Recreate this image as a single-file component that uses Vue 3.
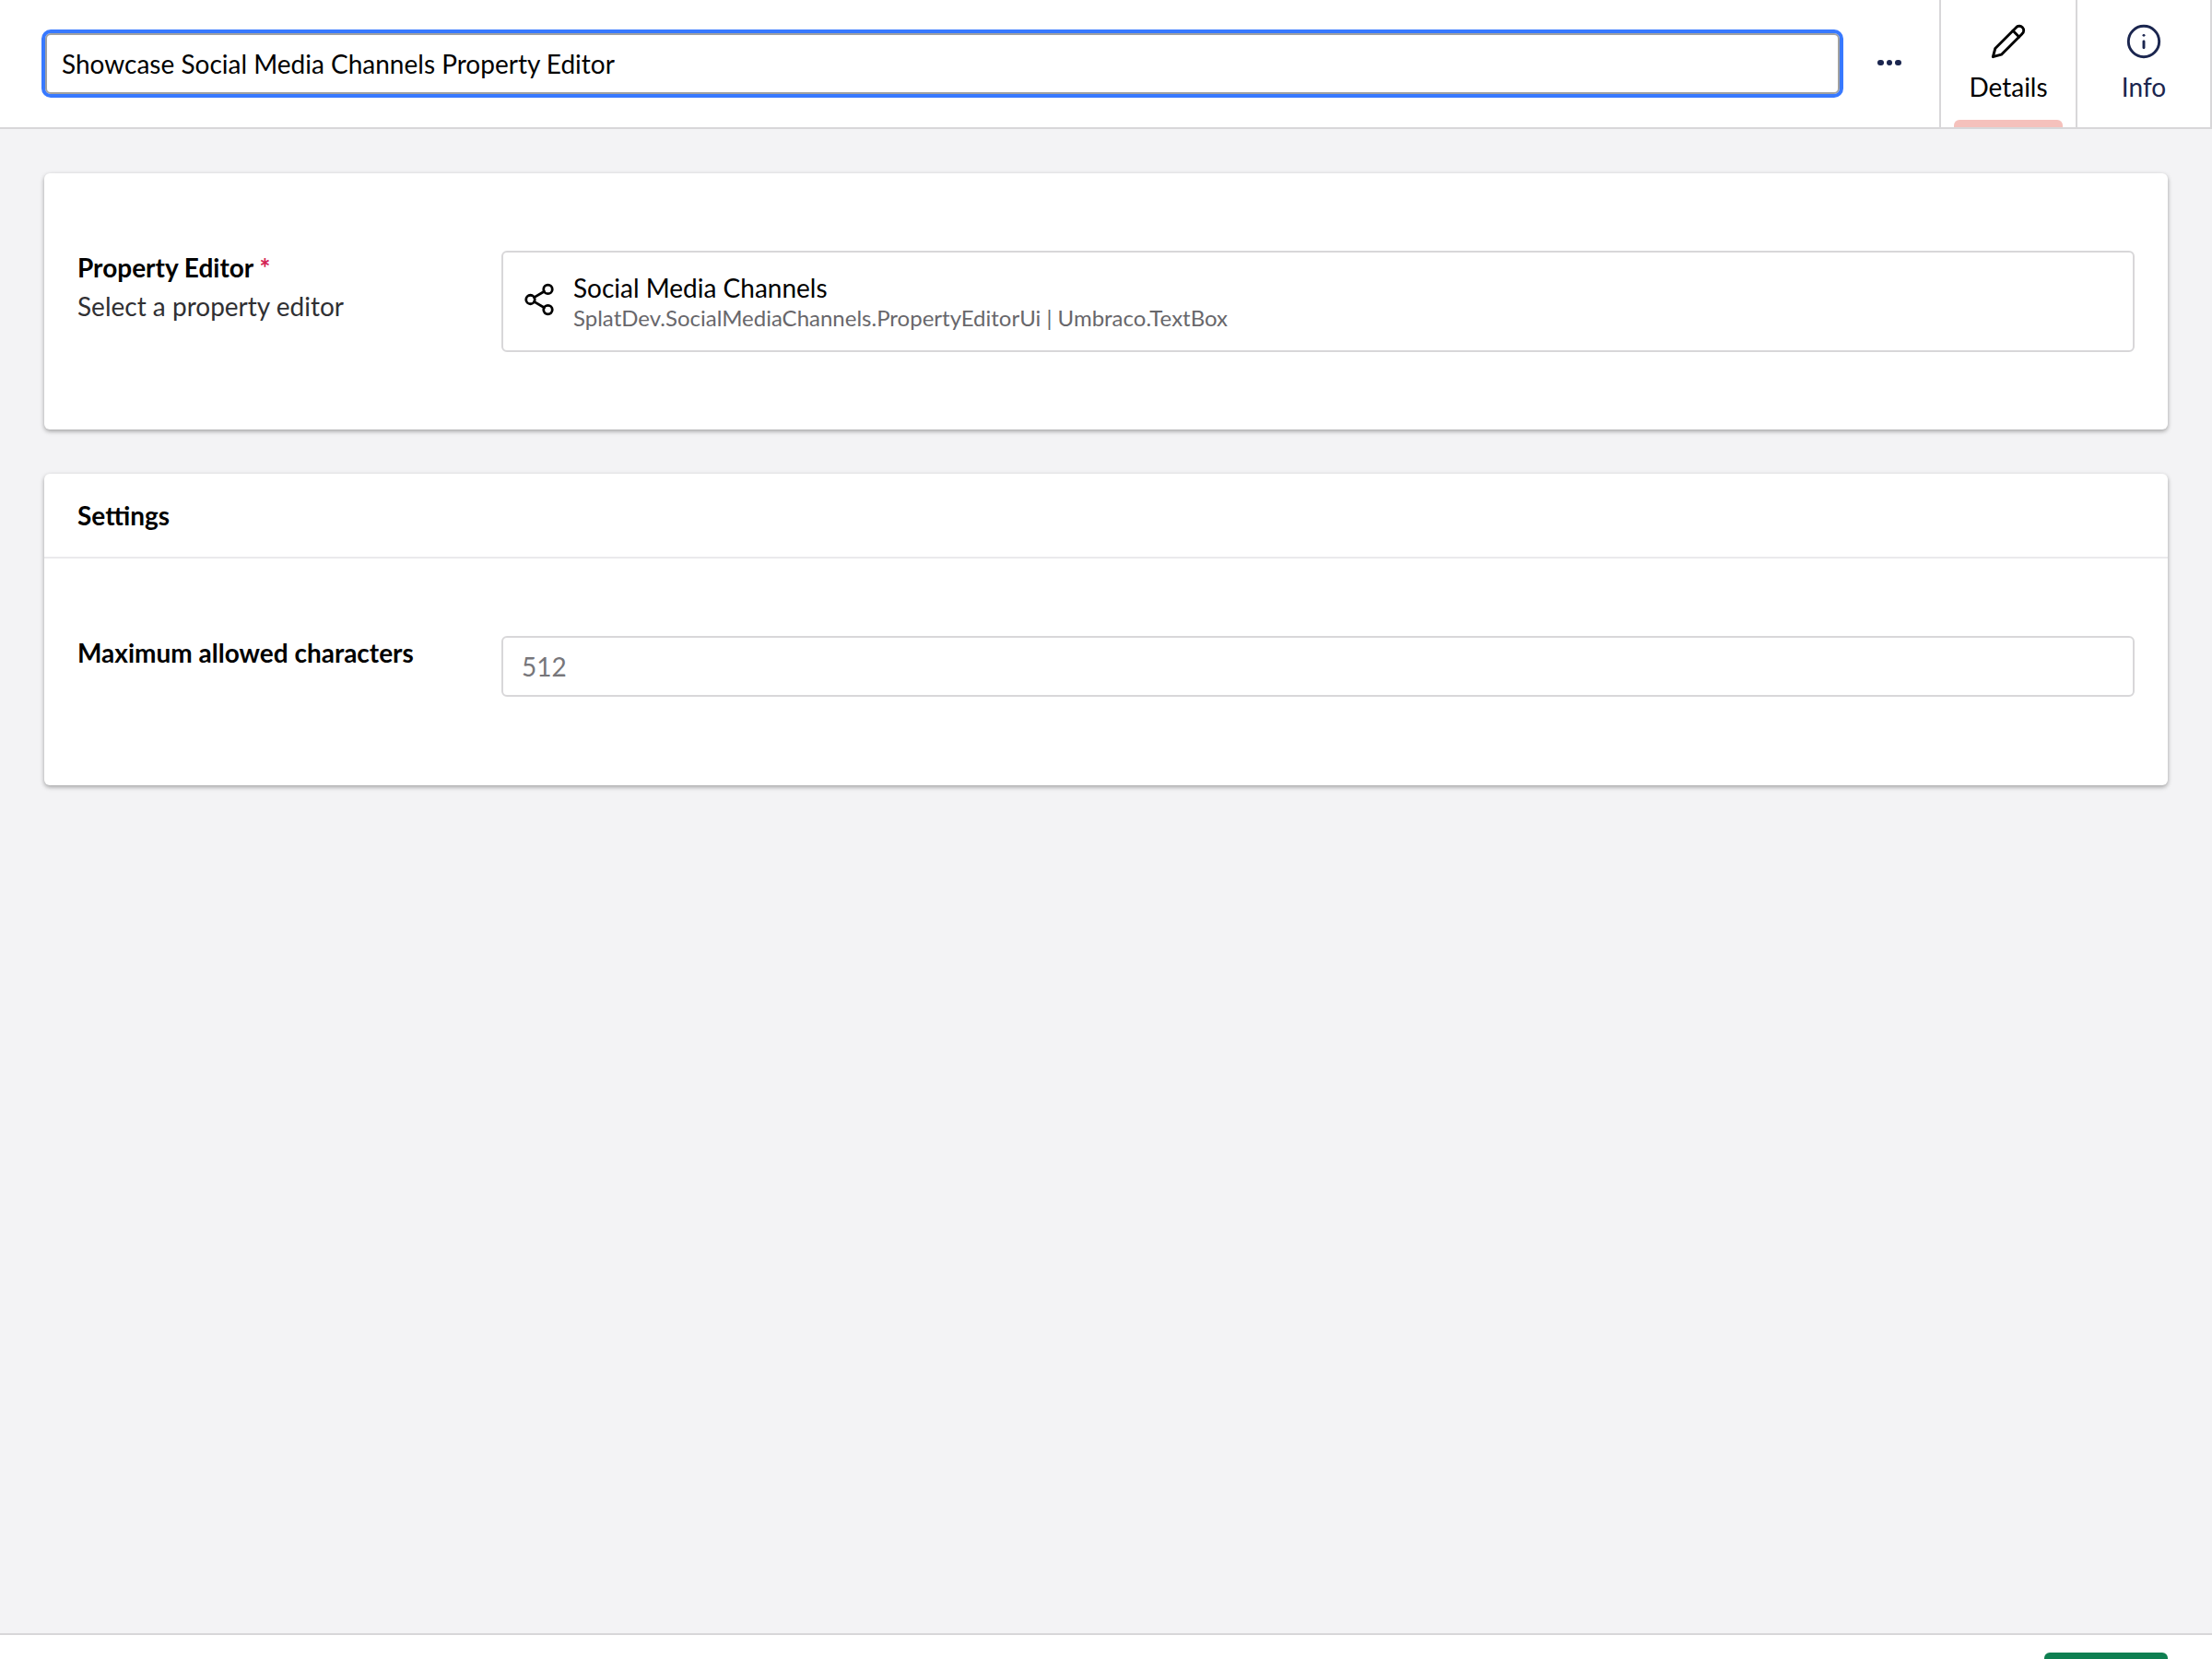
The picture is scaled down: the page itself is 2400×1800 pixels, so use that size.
<template>
  <div class="page">
    <header class="topbar">
      <div class="name-input">Showcase Social Media Channels Property Editor</div>
      <div class="more" aria-label="More"><span></span><span></span><span></span></div>
      <nav class="tabs">
        <div class="tab tab-active">
          <svg class="tab-icon" viewBox="0 0 24 24"><path d="M17 3a2.85 2.83 0 1 1 4 4L7.5 20.5 2 22l1.5-5.5Z"/><path d="m15 5 4 4"/></svg>
          <span class="tab-label">Details</span>
          <i class="tab-marker"></i>
        </div>
        <div class="tab tab-info">
          <svg class="tab-icon" viewBox="0 0 24 24"><circle cx="12" cy="12" r="10"/><path d="M12 16v-4"/><path d="M12 8h.01"/></svg>
          <span class="tab-label">Info</span>
        </div>
      </nav>
    </header>

    <main class="content">
      <section class="card">
        <div class="row row-first">
          <div class="label-col">
            <div class="label">Property Editor <span class="req">*</span></div>
            <div class="desc">Select a property editor</div>
          </div>
          <div class="picked">
            <svg class="picked-icon" viewBox="0 0 24 24"><circle cx="18" cy="5" r="3"/><circle cx="6" cy="12" r="3"/><circle cx="18" cy="19" r="3"/><path d="m8.59 13.51 6.83 3.98"/><path d="m15.41 6.51-6.82 3.98"/></svg>
            <div class="picked-text">
              <div class="picked-name">Social Media Channels</div>
              <div class="picked-alias">SplatDev.SocialMediaChannels.PropertyEditorUi | Umbraco.TextBox</div>
            </div>
          </div>
        </div>
      </section>

      <section class="card">
        <div class="card-head">Settings</div>
        <div class="row row-settings">
          <div class="label-col">
            <div class="label">Maximum allowed characters</div>
          </div>
          <div class="number-input">512</div>
        </div>
      </section>
    </main>

    <footer class="footer">
      <div class="save"></div>
    </footer>
  </div>
</template>

<script setup>
</script>

<style>
html, body { margin: 0; background: #f3f3f5; }
</style>

<style scoped>
.page {
  width: 2400px;
  height: 1800px;
  overflow: hidden;
  display: flex;
  flex-direction: column;
  background: #f3f3f5;
  font-family: Lato, "Liberation Sans", sans-serif;
  font-size: 28px;
  line-height: 42px;
  color: #000;
}
.topbar {
  height: 138px;
  flex: none;
  display: flex;
  align-items: stretch;
  background: #fff;
  border-bottom: 2px solid #d8d7d9;
}
.name-input {
  flex: 1;
  height: 66px;
  box-sizing: border-box;
  margin: 36px 0 0 49px;
  padding: 0 16px;
  display: flex;
  align-items: center;
  background: #fff;
  border: 2px solid #a1a1a1;
  border-radius: 6px;
  outline: 4px solid #3879ff;
  color: #000;
}
.more {
  width: 108px;
  flex: none;
  display: flex;
  align-items: center;
  justify-content: center;
  gap: 3px;
  padding-bottom: 2px;
  box-sizing: border-box;
}
.more span {
  width: 6.5px;
  height: 6.5px;
  border-radius: 50%;
  background: #1b264f;
}
.tabs { display: flex; flex: none; }
.tab {
  position: relative;
  box-sizing: border-box;
  display: flex;
  flex-direction: column;
  align-items: center;
  border-left: 2px solid #d8d7d9;
  padding-top: 25px;
  width: 148px;
}
.tab-info {
  width: 148px;
  border-right: 2px solid #d8d7d9;
  color: #1b264f;
}
.tab-icon {
  width: 40px;
  height: 40px;
  display: block;
  fill: none;
  stroke: currentColor;
  stroke-width: 1.75;
  stroke-linecap: round;
  stroke-linejoin: round;
}
.tab-label { margin-top: 8px; }
.tab-marker {
  position: absolute;
  left: 14px;
  bottom: 0;
  width: 118px;
  height: 8px;
  background: #f5c1bc;
  border-radius: 6px 6px 0 0;
}
.content {
  flex: 1;
  min-height: 0;
  padding: 48px;
  display: flex;
  flex-direction: column;
  gap: 48px;
}
.card {
  background: #fff;
  border-radius: 6px;
  box-shadow: 0 2px 6px rgba(0, 0, 0, 0.12), 0 2px 4px rgba(0, 0, 0, 0.24);
}
.card-head {
  height: 90px;
  box-sizing: border-box;
  padding: 0 36px;
  display: flex;
  align-items: center;
  font-weight: 700;
  border-bottom: 2px solid #ebeaec;
  height: 92px;
}
.row {
  display: grid;
  grid-template-columns: 460px 1fr;
  padding: 84px 36px;
}
.row-settings { padding-bottom: 96px; }
.label-col { margin-top: -3px; }
.label { font-weight: 700; }
.req { color: #d42054; }
.desc { color: #303033; }
.picked {
  height: 110px;
  box-sizing: border-box;
  display: flex;
  align-items: center;
  border: 2px solid #d8d7d9;
  border-radius: 6px;
  padding-left: 20px;
}
.picked-icon {
  width: 38px;
  height: 38px;
  flex: none;
  margin-top: -4px;
  fill: none;
  stroke: #000;
  stroke-width: 1.75;
  stroke-linecap: round;
  stroke-linejoin: round;
}
.picked-text { margin-left: 18px; }
.picked-name { line-height: 36px; }
.picked-alias { font-size: 24px; line-height: 30px; color: #68676b; }
.number-input {
  height: 66px;
  box-sizing: border-box;
  display: flex;
  align-items: center;
  padding-left: 20px;
  border: 2px solid #d8d7d9;
  border-radius: 6px;
  color: #77767a;
}
.footer {
  height: 26px;
  flex: none;
  background: #fff;
  border-top: 2px solid #d8d7d9;
  position: relative;
  overflow: hidden;
}
.save {
  width: 134px;
  height: 60px;
  margin: 19px 48px 0 auto;
  background: #0f7f51;
  border-radius: 6px;
}
</style>
